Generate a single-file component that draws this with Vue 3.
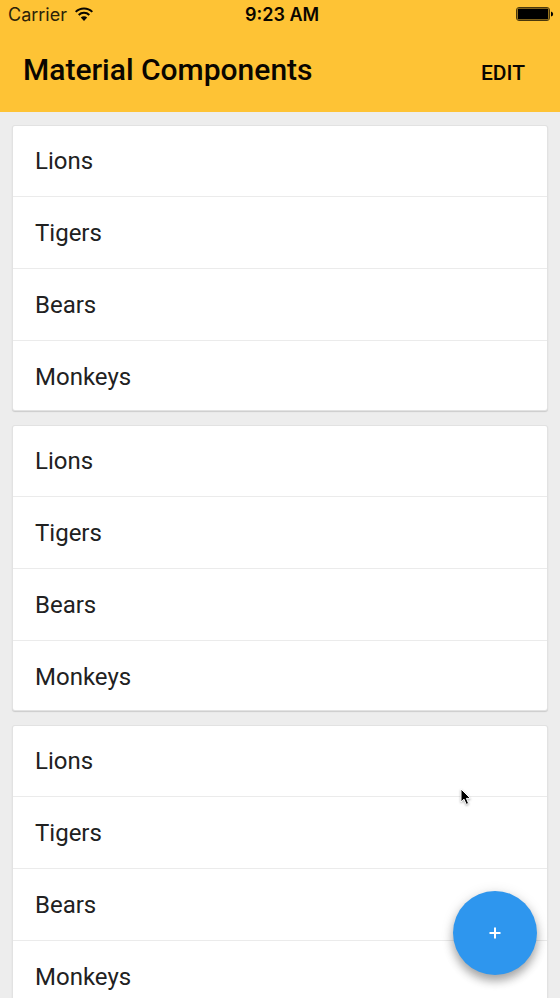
<script setup>
import { ref } from 'vue'

const animals = ['Lions', 'Tigers', 'Bears', 'Monkeys']
const sections = ref([animals, animals, animals])
</script>

<template>
  <div class="screen">
    <header class="app-bar">
      <div class="status">
        <div class="carrier">
          <span>Carrier</span>
          <svg class="wifi" viewBox="0 0 18 14" aria-hidden="true">
            <path d="M0.7 4.9 A11.8 11.8 0 0 1 17.3 4.9" />
            <path d="M3.7 8 A7.5 7.5 0 0 1 14.3 8" />
            <path class="solid" d="M5.8 10.6 A4.5 4.5 0 0 1 12.2 10.6 L9 13.9 Z" />
          </svg>
        </div>
        <time class="clock">9:23 AM</time>
        <svg class="battery" viewBox="0 0 38 14" aria-hidden="true">
          <rect class="shell" x="0.5" y="0.5" width="33" height="13" rx="2.5" />
          <rect x="1.6" y="1.6" width="30.8" height="10.8" rx="1.2" />
          <path d="M35 4.5 Q37.2 5 37.2 7 Q37.2 9 35 9.5 Z" />
        </svg>
      </div>
      <div class="toolbar">
        <h1>Material Components</h1>
        <button type="button" class="edit">EDIT</button>
      </div>
    </header>

    <main class="list">
      <ul v-for="(section, i) in sections" :key="i" class="card">
        <li v-for="name in section" :key="name">{{ name }}</li>
      </ul>
    </main>

    <button type="button" class="fab" aria-label="Add">
      <svg viewBox="0 0 12 12" aria-hidden="true"><path d="M6 0.5V11.5M0.5 6H11.5" /></svg>
    </button>

    <svg class="pointer" viewBox="0 0 12 18" aria-hidden="true">
      <path d="M1 1 V14 L4 11.2 L6.2 16.4 L8.6 15.4 L6.4 10.4 H10.4 Z" />
    </svg>
  </div>
</template>

<style>
body {
  background: #ededed;
}
</style>

<style scoped>
.screen {
  position: relative;
  display: flex;
  flex-direction: column;
  height: 100vh;
  overflow: hidden;
  background: #ededed;
  font-family: Roboto, sans-serif;
  color: #212121;
}

.app-bar {
  flex: none;
  background: #fec335;
  color: #0a0600;
}

.status {
  display: grid;
  grid-template-columns: 1fr auto 1fr;
  align-items: center;
  height: 28px;
  padding: 0 6px 0 8px;
  font-family: Inter, sans-serif;
  font-size: 18px;
}

.carrier {
  display: flex;
  align-items: center;
  gap: 8px;
  color: #2c2208;
}

.wifi {
  width: 18px;
  height: 14px;
  fill: none;
  stroke: #0a0600;
  stroke-width: 2;
}

.wifi .solid {
  fill: #0a0600;
  stroke: none;
}

.clock {
  padding-left: 2px;
  font-weight: 600;
}

.battery {
  justify-self: end;
  width: 38px;
  height: 14px;
  fill: #000;
}

.battery .shell {
  fill: none;
  stroke: #4a380c;
}

.toolbar {
  display: flex;
  align-items: center;
  justify-content: space-between;
  height: 84px;
  padding: 0 35px 0 23px;
}

h1 {
  margin: 0;
  font-size: 30px;
  font-weight: 500;
  line-height: 86px;
}

.edit {
  padding: 6px 0 0;
  border: 0;
  background: none;
  color: inherit;
  font: 500 21px/24px Roboto, sans-serif;
}

.list {
  flex: 1;
  min-height: 0;
  overflow: hidden;
  padding: 14px 13px 0;
}

.card {
  margin: 0 0 16px;
  padding: 0;
  list-style: none;
  border-radius: 2px;
  background: #fff;
  box-shadow: 0 0 0 1px #e2e2e2, 0 1px 1px 1px #cbcbcb;
}

.card li {
  height: 72px;
  box-sizing: border-box;
  padding-left: 22px;
  border-bottom: 1px solid #ebebeb;
  font-size: 24px;
  line-height: 73px;
}

.card li:first-child {
  height: 71px;
  line-height: 71px;
}

.card li:last-child {
  height: 69px;
  border-bottom: 0;
}

.fab {
  position: absolute;
  right: 23px;
  bottom: 23px;
  display: flex;
  align-items: center;
  justify-content: center;
  width: 84px;
  height: 84px;
  padding: 0;
  border: 0;
  border-radius: 50%;
  background: #2e96ee;
  box-shadow: 0 6px 10px rgba(0, 0, 0, 0.3), 0 2px 14px rgba(0, 0, 0, 0.12);
}

.fab svg {
  width: 12px;
  height: 12px;
  fill: none;
  stroke: #fff;
  stroke-width: 2;
}

.pointer {
  position: absolute;
  left: 460px;
  top: 788px;
  width: 12px;
  height: 18px;
  fill: #000;
  stroke: #fff;
  stroke-width: 1;
  filter: drop-shadow(0 1px 1px rgba(0, 0, 0, 0.3));
}
</style>
